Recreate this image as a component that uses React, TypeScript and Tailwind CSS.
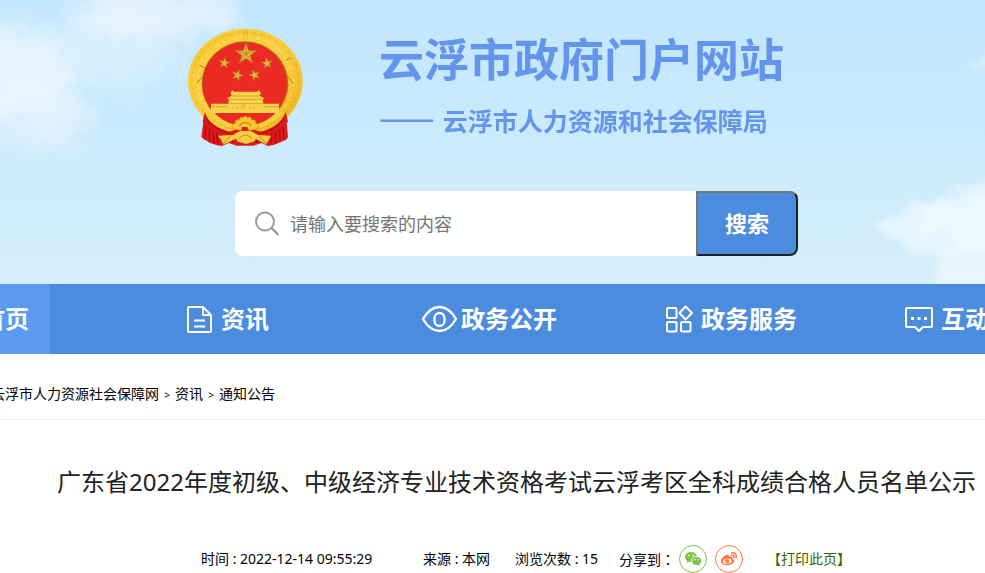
import type { ReactNode } from "react";

const star = (cx: number, cy: number, r: number, turn = 0) =>
  Array.from({ length: 10 }, (_, i) => {
    const a = ((i * 36 - 90 + turn) * Math.PI) / 180;
    const q = i % 2 ? r * 0.38 : r;
    return `${(cx + q * Math.cos(a)).toFixed(1)},${(cy + q * Math.sin(a)).toFixed(1)}`;
  }).join(" ");

function Sky() {
  return (
    <svg
      className="absolute inset-0 h-full w-full"
      viewBox="0 0 985 284"
      preserveAspectRatio="none"
      aria-hidden="true"
    >
      <defs>
        <linearGradient id="sky" x1="0" y1="0" x2="0" y2="1">
          <stop offset="0" stopColor="#c1e6fd" />
          <stop offset="0.5" stopColor="#cbeafd" />
          <stop offset="1" stopColor="#d6eff9" />
        </linearGradient>
        <filter id="cloud" x="-20%" y="-20%" width="140%" height="140%">
          <feTurbulence type="fractalNoise" baseFrequency="0.03" numOctaves="5" seed="4" result="n" />
          <feDisplacementMap in="SourceGraphic" in2="n" scale="40" xChannelSelector="R" yChannelSelector="G" result="d" />
          <feGaussianBlur in="d" stdDeviation="2" />
        </filter>
        <filter id="haze" x="-30%" y="-30%" width="160%" height="160%">
          <feTurbulence type="fractalNoise" baseFrequency="0.02" numOctaves="4" seed="9" result="n" />
          <feGaussianBlur in="SourceGraphic" stdDeviation="12" result="b" />
          <feDisplacementMap in="b" in2="n" scale="60" xChannelSelector="R" yChannelSelector="G" />
        </filter>
      </defs>
      <rect width="985" height="284" fill="url(#sky)" />
      <g filter="url(#haze)" fill="#f4faff">
        <ellipse cx="10" cy="70" rx="62" ry="50" opacity="0.6" />
        <ellipse cx="150" cy="12" rx="80" ry="30" opacity="0.5" />
        <ellipse cx="110" cy="50" rx="70" ry="34" opacity="0.35" />
        <ellipse cx="40" cy="120" rx="52" ry="32" opacity="0.4" />
      </g>
      <g filter="url(#cloud)" fill="#f5fbff">
        <path d="M-30 22 L28 24 L50 45 L62 70 L88 86 L84 105 L92 124 L76 140 L50 138 L20 120 L-30 115Z" opacity="0.18" />
        <path d="M80 -30 H228 L230 15 L212 28 L180 42 L130 35 L92 15Z" opacity="0.22" />
      </g>
      <g filter="url(#cloud)" fill="#f3fbff">
        <path d="M880 230 L896 212 L916 202 L936 205 L950 192 L1010 184 V310 H944 L934 265 L936 252 L906 248Z" opacity="0.55" />
        <path d="M915 222 L945 206 L1010 196 V262 L950 246Z" opacity="0.5" />
        <path d="M948 184 h34 v5 h-30z" opacity="0.5" />
        <path d="M965 64 l40 -18 v24z" opacity="0.4" />
      </g>
    </svg>
  );
}

function Emblem() {
  return (
    <svg className="h-[120px] w-[116px] shrink-0" viewBox="51 39 348 360" role="img" aria-label="国徽">
      <defs>
        <linearGradient id="gold" x1="0" y1="0" x2="1" y2="1">
          <stop offset="0" stopColor="#fbc933" />
          <stop offset="0.5" stopColor="#f7cf43" />
          <stop offset="1" stopColor="#eeb31c" />
        </linearGradient>
      </defs>
      <path
        d="M104 292 L94 366 L103 374 L111 378 L120 384 L132 388 L142 391 L156 393 L176 384 L200 392 L250 392 L275 384 L294 393 L310 390 L324 385 L338 379 L349 374 L354 366 L347 292Z"
        fill="#dc1a1c"
      />
      <path
        d="M108 320 L105 370 M118 328 L118 378 M128 338 L132 386 M139 346 L144 388 M338 320 L342 370 M328 330 L330 378 M317 338 L316 384 M306 346 L303 388 M184 362 L190 384 M264 362 L260 384"
        stroke="#a30f13"
        strokeWidth="4"
        fill="none"
      />
      <ellipse cx="226" cy="199" rx="172" ry="158" fill="url(#gold)" />
      <ellipse
        cx="226" cy="199" rx="160" ry="147" fill="none" stroke="#d99a14" strokeWidth="6"
        strokeDasharray="9 5 3 7" opacity="0.35"
      />
      <ellipse
        cx="226" cy="200" rx="143" ry="133" fill="none" stroke="#fde06c" strokeWidth="5"
        strokeDasharray="14 6 5 9" opacity="0.6"
      />
      <ellipse cx="225" cy="206" rx="130" ry="127" fill="#a97715" />
      <ellipse cx="224" cy="207" rx="127" ry="125" fill="#ec2a24" />
      <path d="M80 205 L98 184 M370 205 L352 184 M89 150 l14 8 M348 136 l14 -8" stroke="#b57b12" strokeWidth="3" />
      <path d="M221 44 v29 M231 44 v29" stroke="#d99a14" strokeWidth="3" opacity="0.6" />
      <g fill="#e3b53a" stroke="#b07f1e" strokeWidth="1.500">
        <polygon points={star(228, 117, 34)} />
        <polygon points={star(163, 144, 17, 8)} />
        <polygon points={star(291, 145, 17, -8)} />
        <polygon points={star(202, 181, 17, 20)} />
        <polygon points={star(254, 180, 17, -20)} />
      </g>
      <path
        d="M228 84 L228 116 L246 143 M228 116 L259 106 M228 116 L208 143 M228 116 L196 106"
        stroke="#a8761a"
        strokeWidth="2"
        fill="none"
      />
      <path
        d="M123 266 H174 L177 254 L171 250 L185 242 L182 233 L187 226 L192 230 H260 L267 226 L273 235 L268 242 L283 250 L278 254 L280 266 H327 V294 H123Z"
        fill="#f8d34c"
      />
      <path
        d="M185 243 H268 M178 253 H278 M174 266 H280 M124 275 H174 M280 275 H326"
        stroke="#c98c17"
        strokeWidth="2"
        fill="none"
      />
      <path
        d="M215 282 v-9 q4 -6 8 0 v9 M190 282 v-6 M202 282 v-7 M240 282 v-7 M254 282 v-6"
        stroke="#d99a14"
        strokeWidth="2"
        fill="none"
      />
      <path d="M104 292 Q120 336 178 350 L222 336 L274 350 Q329 336 347 292 L354 320 Q330 352 278 366 L226 347 L172 366 Q118 350 98 320Z" fill="#d9191c" />
      <path d="M110 312 Q136 346 180 356 M342 312 Q314 346 270 356" stroke="#a30f13" strokeWidth="3" fill="none" />
      <path d="M112 291 Q132 322 186 340 L194 331 Q150 316 132 291Z M339 291 Q319 322 265 340 L257 331 Q300 316 320 291Z" fill="#f8cf43" />
      <path
        d="M186 341 L188 328 L196 325 L198 315 L207 315 L212 306 L220 308 L226 302 L233 308 L241 306 L246 315 L255 315 L257 325 L265 328 L266 341 L238 346 Q226 330 214 346Z"
        fill="#f6c633"
        stroke="#d99a14"
        strokeWidth="2"
      />
      <path d="M208 333 Q226 312 244 333" stroke="#d0911a" strokeWidth="4" fill="none" />
      <path
        d="M144 362 L188 360 L205 350 Q226 342 247 350 L264 360 L304 362 L288 388 L258 372 L252 380 L240 383 L228 387 L216 383 L203 380 L198 371 L160 389 L154 375Z"
        fill="#f6cc45"
      />
      <path d="M160 386 L184 361 M288 384 L266 361 M208 370 Q226 350 246 370" stroke="#c98c17" strokeWidth="3" fill="none" />
      <path d="M216 336 L232 336 L236 347 L214 347Z" fill="#d9191c" />
    </svg>
  );
}

function NavIcon({ children }: { children?: ReactNode }) {
  return (
    <svg
      className="mr-1 h-9 w-9 shrink-0"
      viewBox="0 0 36 36"
      fill="none"
      stroke="currentColor"
      strokeWidth="2"
      strokeLinejoin="round"
      aria-hidden="true"
    >
      {children}
    </svg>
  );
}

const navItems: { label: string; icon: ReactNode }[] = [
  {
    label: "资讯",
    icon: (
      <>
        <path d="M8 6 H22 L30 14 V30 Q30 31 29 31 H8 Q7 31 7 30 V7 Q7 6 8 6Z" />
        <path d="M22 6 V14 H30" />
        <path d="M13 19.5 H24 M13 25.5 H24" />
      </>
    ),
  },
  {
    label: "政务公开",
    icon: (
      <>
        <path d="M2 18 Q9 6 18.500 6 Q28 6 35 18 Q28 30 18.500 30 Q9 30 2 18Z" strokeWidth="2.300" />
        <rect x="13.500" y="12" width="10" height="13" rx="5" strokeWidth="2.300" />
      </>
    ),
  },
  {
    label: "政务服务",
    icon: (
      <g strokeWidth="2">
        <rect x="6" y="7" width="9.500" height="10" rx="1" />
        <path d="M24.500 5.500 L31 12 L24.500 18.500 L18.500 12Z" />
        <rect x="6" y="21" width="9.500" height="9.500" rx="1" />
        <rect x="20" y="21" width="9.500" height="9.500" rx="1" />
      </g>
    ),
  },
  {
    label: "互动交流",
    icon: (
      <>
        <path d="M6 7 H30 Q31 7 31 8 V25 Q31 26 30 26 H22 L18 30 L14 26 H6 Q5 26 5 25 V8 Q5 7 6 7Z" />
        <path d="M10 17.500 h3 M16.500 17.500 h3 M23 17.500 h3" strokeWidth="3" />
      </>
    ),
  },
];

export default function App() {
  return (
    <div className="min-h-screen overflow-hidden bg-white font-['Noto_Sans','Noto_Sans_CJK_SC',sans-serif] text-black">
      <header className="relative h-[284px]">
        <Sky />
        <div className="relative flex pt-7 pl-[187px]">
          <Emblem />
          <div className="ml-[76px] font-bold whitespace-nowrap text-[#6495ed]">
            <h1 className="text-[45px] leading-[64px]">云浮市政府门户网站</h1>
            <p className="mt-4 flex gap-2 text-[25px] leading-[26px]">
              <span className="font-['Noto_Sans_CJK_SC',sans-serif] text-[33px] leading-4 font-medium">——</span>
              <span>云浮市人力资源和社会保障局</span>
            </p>
          </div>
        </div>
        <form
          className="relative mt-[43px] ml-[235px] flex h-[65px] w-[563px]"
          onSubmit={(e) => e.preventDefault()}
        >
          <div className="flex min-w-0 flex-1 items-center rounded-l-lg bg-white pl-[19px]">
            <svg
              className="h-7 w-7 shrink-0"
              viewBox="0 0 28 28"
              fill="none"
              stroke="#999"
              strokeWidth="2"
              aria-hidden="true"
            >
              <circle cx="11" cy="11.500" r="9" />
              <path d="M17.500 18 L24.500 25" strokeWidth="2.300" />
            </svg>
            <input
              type="text"
              aria-label="搜索内容"
              placeholder="请输入要搜索的内容"
              className="ml-2 min-w-0 flex-1 bg-transparent text-lg outline-none placeholder:text-[#757575]"
            />
          </div>
          <button
            type="submit"
            className="w-[102px] rounded-r-lg border-2 border-t-[#767676] border-r-[#212121] border-b-[#212121] border-l-[#767676] bg-[#4b8cde] text-[22px] font-bold text-white"
          >
            搜索
          </button>
        </form>
      </header>

      <nav className="overflow-hidden bg-[#4b8cde] text-2xl font-bold text-white">
        <ul className="-ml-[59px] flex h-[70px] whitespace-nowrap">
          <li className="w-60 shrink-0">
            <a href="#home" className="flex h-full w-[109px] items-center bg-[#5b9aee]">
              <NavIcon />
              首页
            </a>
          </li>
          {navItems.map((item) => (
            <li key={item.label} className="w-60 shrink-0">
              <a href="#nav" className="flex h-full items-center">
                <NavIcon>{item.icon}</NavIcon>
                {item.label}
              </a>
            </li>
          ))}
        </ul>
      </nav>

      <div className="-ml-[9px] flex h-[66px] items-center border-b border-[#eeeeee] pt-3.5 text-sm whitespace-nowrap">
        <a href="#site">云浮市人力资源社会保障网</a>
        <span className="w-4 pt-1 text-center text-[10px]">&gt;</span>
        <a href="#news">资讯</a>
        <span className="w-4 pt-1 text-center text-[10px]">&gt;</span>
        <a href="#notice">通知公告</a>
      </div>

      <main>
        <h2 className="mt-[44px] pl-12 text-center text-2xl leading-9 whitespace-nowrap text-[#222222]">
          广东省2022年度初级、中级经济专业技术资格考试云浮考区全科成绩合格人员名单公示
        </h2>
        <div className="mt-[45px] flex h-7 items-center pl-[201px] text-sm whitespace-nowrap">
          <span className="w-[222px]">时间 : 2022-12-14 09:55:29</span>
          <span className="w-[92px]">来源 : 本网</span>
          <span className="w-[104px]">浏览次数 : 15</span>
          <span className="w-[60px]">
            分享到<span className="font-['Noto_Sans_CJK_TC',sans-serif]">：</span>
          </span>
          <button
            type="button"
            aria-label="分享到微信"
            className="flex h-7 w-7 items-center justify-center rounded-full border border-[#7bc549] text-[#7bc549]"
          >
            <svg className="h-[18px] w-[18px]" viewBox="0 0 18 18" aria-hidden="true">
              <path
                fill="currentColor"
                d="M7 2 C3.500 2 1 4.200 1 7 C1 8.600 1.800 10 3.200 11 L2.600 13 L5 11.800 C6 12 6.500 12.100 7.200 12 C6.800 8.500 9.500 6 13 6.100 C12.400 3.600 10 2 7 2Z"
              />
              <path
                fill="currentColor"
                d="M12.600 6.800 C9.900 6.800 7.900 8.600 7.900 10.900 C7.900 13.200 9.900 15 12.600 15 L14.100 14.800 L16 15.900 L15.500 14.100 C16.500 13.300 17.200 12.200 17.200 10.900 C17.200 8.600 15.200 6.800 12.600 6.800Z"
              />
              <g fill="#fff">
                <circle cx="5" cy="5.500" r="0.800" />
                <circle cx="9" cy="5.500" r="0.800" />
                <circle cx="11" cy="9.800" r="0.700" />
                <circle cx="14.200" cy="9.800" r="0.700" />
              </g>
            </svg>
          </button>
          <button
            type="button"
            aria-label="分享到微博"
            className="ml-2 flex h-7 w-7 items-center justify-center rounded-full border border-[#ff763b] text-[#ff763b]"
          >
            <svg className="h-[18px] w-[18px]" viewBox="0 0 18 18" aria-hidden="true">
              <path
                fill="currentColor"
                d="M7.500 4.500 C5.200 4.700 1 8.200 1 11 C1 13.600 4 15.200 7.300 15.200 C11.400 15.200 14.300 12.900 14.300 10.800 C14.300 9.500 13.200 8.800 12.300 8.500 C12.800 6.500 11.500 6 8.800 7 C9.200 5.400 9 4.500 7.500 4.500Z"
              />
              <ellipse cx="7.300" cy="11.200" rx="4.300" ry="2.700" fill="#fff" transform="rotate(-8 7.300 11.200)" />
              <circle cx="6.900" cy="11.300" r="2.300" fill="currentColor" />
              <circle cx="6.200" cy="11.900" r="0.700" fill="#fff" />
              <path
                d="M11.500 2.900 C14.800 2.200 17 4.700 16 7.800 M11.800 5.300 C13.400 5 14.300 6 13.900 7.400"
                fill="none"
                stroke="currentColor"
                strokeWidth="1.500"
                strokeLinecap="round"
              />
            </svg>
          </button>
          <button type="button" className="ml-6 text-[#336600]">
            【打印此页】
          </button>
        </div>
      </main>
    </div>
  );
}
